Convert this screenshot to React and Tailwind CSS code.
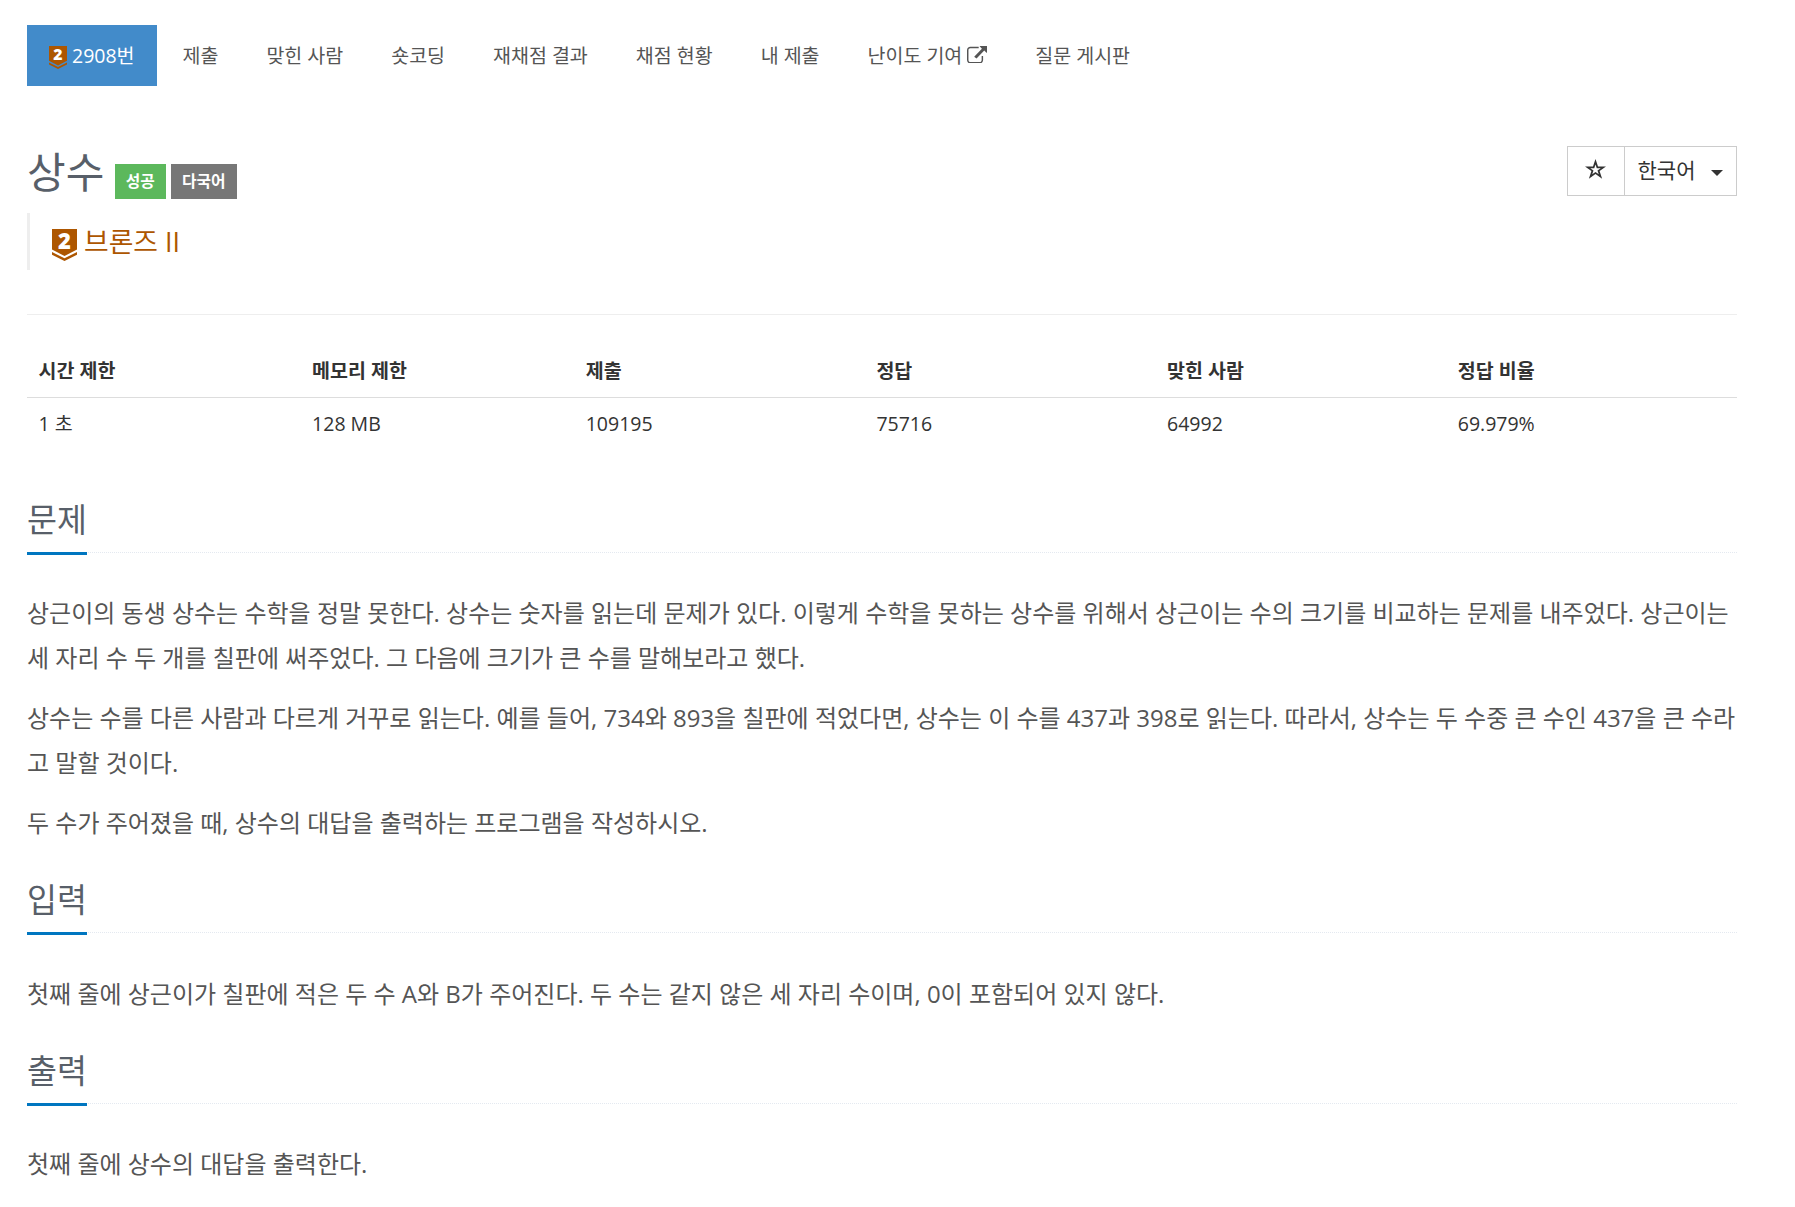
const tabs = ['제출', '맞힌 사람', '숏코딩', '재채점 결과', '채점 현황', '내 제출', '난이도 기여', '질문 게시판']

const stats = [
    { label: '시간 제한', value: '1 초', width: 'w-[16%]' },
    { label: '메모리 제한', value: '128 MB', width: 'w-[16%]' },
    { label: '제출', value: '109195', width: 'w-[17%]' },
    { label: '정답', value: '75716', width: 'w-[17%]' },
    { label: '맞힌 사람', value: '64992', width: 'w-[17%]' },
    { label: '정답 비율', value: '69.979%', width: 'w-[17%]' },
]

const sections = [
    {
        title: '문제',
        body: [
            '상근이의 동생 상수는 수학을 정말 못한다. 상수는 숫자를 읽는데 문제가 있다. 이렇게 수학을 못하는 상수를 위해서 상근이는 수의 크기를 비교하는 문제를 내주었다. 상근이는 세 자리 수 두 개를 칠판에 써주었다. 그 다음에 크기가 큰 수를 말해보라고 했다.',
            '상수는 수를 다른 사람과 다르게 거꾸로 읽는다. 예를 들어, 734와 893을 칠판에 적었다면, 상수는 이 수를 437과 398로 읽는다. 따라서, 상수는 두 수중 큰 수인 437을 큰 수라고 말할 것이다.',
            '두 수가 주어졌을 때, 상수의 대답을 출력하는 프로그램을 작성하시오.',
        ],
    },
    {
        title: '입력',
        body: ['첫째 줄에 상근이가 칠판에 적은 두 수 A와 B가 주어진다. 두 수는 같지 않은 세 자리 수이며, 0이 포함되어 있지 않다.'],
    },
    {
        title: '출력',
        body: ['첫째 줄에 상수의 대답을 출력한다.'],
    },
]

function TierBadge({ className }) {
    return (
        <svg viewBox="0 0 25 32" className={`overflow-visible ${className}`}>
            <path d="M0 0H25V20.5L12.5 27L0 20.5Z" fill="#ad5600" />
            <path d="M0 23L12.5 29.3L25 23V25.7L12.5 32L0 25.7Z" fill="#ad5600" />
            <text x="12.5" y="19.8" textAnchor="middle" fontSize="22" fontWeight="800" fontFamily="Open Sans" fill="#fff">2</text>
        </svg>
    )
}

function ExternalIcon() {
    return (
        <svg viewBox="0 64 1792 1472" preserveAspectRatio="none" className="mb-0.5 ml-[4.5px] h-[17.5px] w-[20.5px]" fill="currentColor">
            <path d="M1408 800v320q0 119-84.5 203.5T1120 1408H288q-119 0-203.5-84.5T0 1120V288Q0 169 84.500 84.500T288 0h704q14 0 23 9t9 23v64q0 14-9 23t-23 9H288q-66 0-113 47t-47 113v832q0 66 47 113t113 47h832q66 0 113-47t47-113V800q0-14 9-23t23-9h64q14 0 23 9t9 23zM1792-64v512q0 26-19 45t-45 19-45-19l-176-176-652 652q-10 10-23 10t-23-10L650 855q-10-10-10-23t10-23l652-652-176-176q-19-19-19-45t19-45 45-19h512q26 0 45 19t19 45z" transform="translate(0 128)" />
        </svg>
    )
}

function Tabs() {
    return (
        <ul className="flex h-[61px] gap-[3px] text-[19.5px] text-[#555]">
            <li className="flex w-[130px] items-center bg-[#428bca] pl-[22px] text-white">
                <TierBadge className="mt-1 mr-[5px] h-[23px] w-[18px]" />
                2908번
            </li>
            {tabs.map((tab) => (
                <li key={tab} className="flex items-center px-[22.5px]">
                    {tab}
                    {tab === '난이도 기여' && <ExternalIcon />}
                </li>
            ))}
        </ul>
    )
}

function Title() {
    return (
        <div className="mt-[60px] flex h-[54px] items-start justify-between">
            <div className="flex">
                <h1 className="text-[42px] leading-[52px] text-[#585f69]">상수</h1>
                <span className="mt-[18px] ml-[11px] h-[35px] w-[51px] bg-[#5cb85c] pr-px text-center text-[15.8px] leading-[35px] font-semibold text-white">성공</span>
                <span className="mt-[18px] ml-[5px] h-[35px] w-[66px] bg-[#777] pr-px text-center text-[15.8px] leading-[35px] font-semibold text-white">다국어</span>
            </div>
            <div className="flex h-[50px] border border-[#ccc] text-[21px] text-[#333]">
                <button className="flex w-[57px] items-center justify-center border-r border-[#ccc]">
                    <svg viewBox="0 0 20 19" className="mr-px mb-1 h-5 w-[21px]" fill="currentColor" fillRule="evenodd">
                        <path d="M10 0L12.4 7H20L13.9 11.5L16.3 18.8L10 14.3L3.7 18.8L6.1 11.5L0 7H7.600ZM10 5.200L8.800 8.700H5L8.100 11L6.900 14.600L10 12.300L13.100 14.600L11.900 11L15 8.700H11.200Z" />
                    </svg>
                </button>
                <button className="flex w-[111px] items-center pl-[12.5px]">
                    한국어
                    <svg viewBox="0 0 12 6" className="mt-1 ml-4 h-1.5 w-3" fill="currentColor">
                        <path d="M0 0H12L6 6Z" />
                    </svg>
                </button>
            </div>
        </div>
    )
}

function StatsTable() {
    return (
        <table className="mt-8 w-full table-fixed text-left text-[19.5px] text-[#333]">
            <thead>
                <tr className="h-[50px] border-b border-[#ddd]">
                    {stats.map((stat) => (
                        <th key={stat.label} className={`px-[11.5px] pb-0.5 font-bold ${stat.width}`}>{stat.label}</th>
                    ))}
                </tr>
            </thead>
            <tbody>
                <tr className="h-[52px]">
                    {stats.map((stat) => (
                        <td key={stat.label} className="px-[11.5px]">{stat.value}</td>
                    ))}
                </tr>
            </tbody>
        </table>
    )
}

function Section({ title, body }) {
    return (
        <section>
            <div className="mb-[37.5px] flex h-[73.2px] items-end border-b border-dotted border-[#e4e9f0]">
                <h2 className="-mb-[3px] h-[59px] border-b-3 border-[#0076c0] text-[32.6px] leading-[47px] text-[#585f69]">{title}</h2>
            </div>
            {body.map((text) => (
                <p key={text} className="mb-[15px] text-[24px] leading-[45px] break-all text-[#555]">{text}</p>
            ))}
        </section>
    )
}

function App() {
    return (
        <div className="h-[1207px] overflow-hidden bg-white pt-[25px] pl-[27px] font-['Open_Sans','Noto_Sans_CJK_KR',sans-serif]" lang="ko">
            <div className="w-[1710px]">
                <Tabs />
                <Title />
                <blockquote className="mt-[13px] flex h-[57px] items-center border-l-3 border-[#eee] pl-[22px] text-[26.8px] text-[#ad5600]">
                    <TierBadge className="mt-1.5 mr-[7px] h-8 w-[25px]" />
                    <span className="pt-0.5">브론즈 II</span>
                </blockquote>
                <hr className="mt-[44px] border-[#eee]" />
                <StatsTable />
                <div className="mt-[30.4px]">
                    {sections.map((section) => (
                        <Section key={section.title} {...section} />
                    ))}
                </div>
            </div>
        </div>
    )
}

export default App
